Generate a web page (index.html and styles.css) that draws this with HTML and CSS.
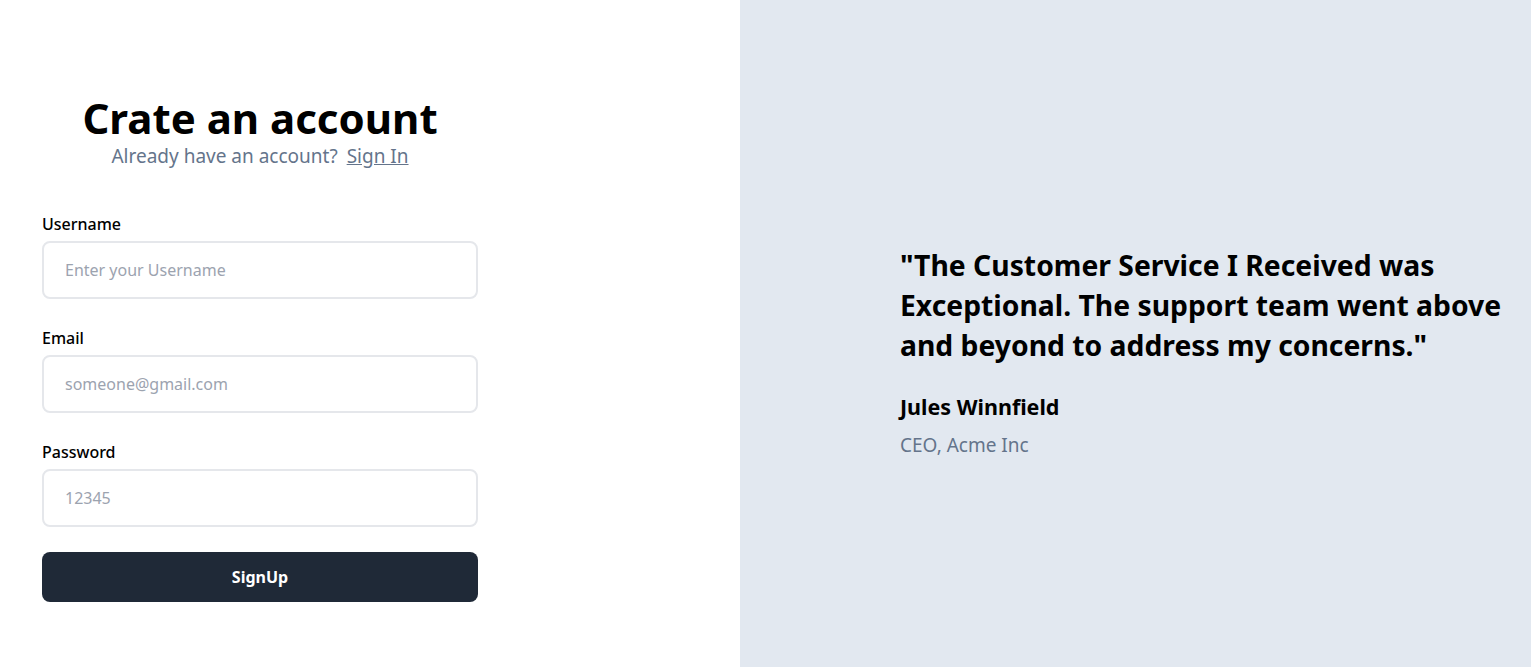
FILE: index.html
```html
<!DOCTYPE html>
<html lang="en">
<head>
<meta charset="utf-8">
<title>Create an account</title>
<link rel="stylesheet" href="styles.css">
</head>
<body>
<main class="page">
  <section class="left">
    <div class="form-wrap">
      <header class="head">
        <h1 class="title">Crate an account</h1>
        <p class="sub">Already have an account? <a href="#" class="link">Sign In</a></p>
      </header>
      <form class="form">
        <div class="field">
          <label class="label" for="u">Username</label>
          <input class="input" id="u" type="text" placeholder="Enter your Username">
        </div>
        <div class="field">
          <label class="label" for="e">Email</label>
          <input class="input" id="e" type="email" placeholder="someone@gmail.com">
        </div>
        <div class="field">
          <label class="label" for="p">Password</label>
          <input class="input" id="p" type="password" placeholder="12345">
        </div>
        <button class="btn" type="button">SignUp</button>
      </form>
    </div>
  </section>
  <section class="right">
    <figure class="testimonial">
      <blockquote class="quote">"The Customer Service I Received was<br>Exceptional. The support team went above<br>and beyond to address my concerns."</blockquote>
      <figcaption class="author">
        <div class="name">Jules Winnfield</div>
        <div class="role">CEO, Acme Inc</div>
      </figcaption>
    </figure>
  </section>
</main>
</body>
</html>
```
FILE: styles.css
```css
* { box-sizing: border-box; }
html, body { margin: 0; padding: 0; }
body {
  font-family: "Noto Sans", "Open Sans", sans-serif;
  color: #000;
  background: #fff;
}
.page {
  display: grid;
  grid-template-columns: 740px 1fr;
  height: 667px;
}
.left {
  padding: 94px 42px 0;
}
.form-wrap { width: 436px; }
.head { text-align: center; }
.title {
  margin: 0;
  font-size: 42px;
  line-height: 48px;
  font-weight: 700;
}
.sub {
  margin: 0;
  font-size: 19px;
  line-height: 28px;
  color: #64748b;
}
.link { color: #64748b; text-decoration: underline; margin-left: 4px; }
.form {
  margin-top: 42px;
  display: flex;
  flex-direction: column;
  gap: 27px;
}
.field {
  display: flex;
  flex-direction: column;
  gap: 5px;
}
.label {
  font-size: 16px;
  line-height: 24px;
  font-weight: 500;
}
.input {
  height: 58px;
  border: 2px solid #e5e7eb;
  border-radius: 8px;
  padding: 0 21px;
  font-family: inherit;
  font-size: 16px;
  color: #111;
  outline: none;
}
.input::placeholder { color: #9ca3af; }
.btn {
  margin-top: -2px;
  height: 50px;
  border: 0;
  border-radius: 8px;
  background: #1f2937;
  color: #fff;
  font-family: inherit;
  font-size: 16px;
  font-weight: 700;
}
.right {
  background: #e2e8f0;
  display: flex;
  align-items: center;
  padding: 36px 20px 0 160px;
}
.testimonial { margin: 0; }
.quote {
  margin: 0;
  font-size: 28.3px;
  line-height: 40px;
  font-weight: 700;
}
.author { margin-top: 28px; }
.name {
  font-size: 21.5px;
  line-height: 28px;
  font-weight: 700;
}
.role {
  margin-top: 10px;
  font-size: 19px;
  line-height: 28px;
  color: #64748b;
}
```
